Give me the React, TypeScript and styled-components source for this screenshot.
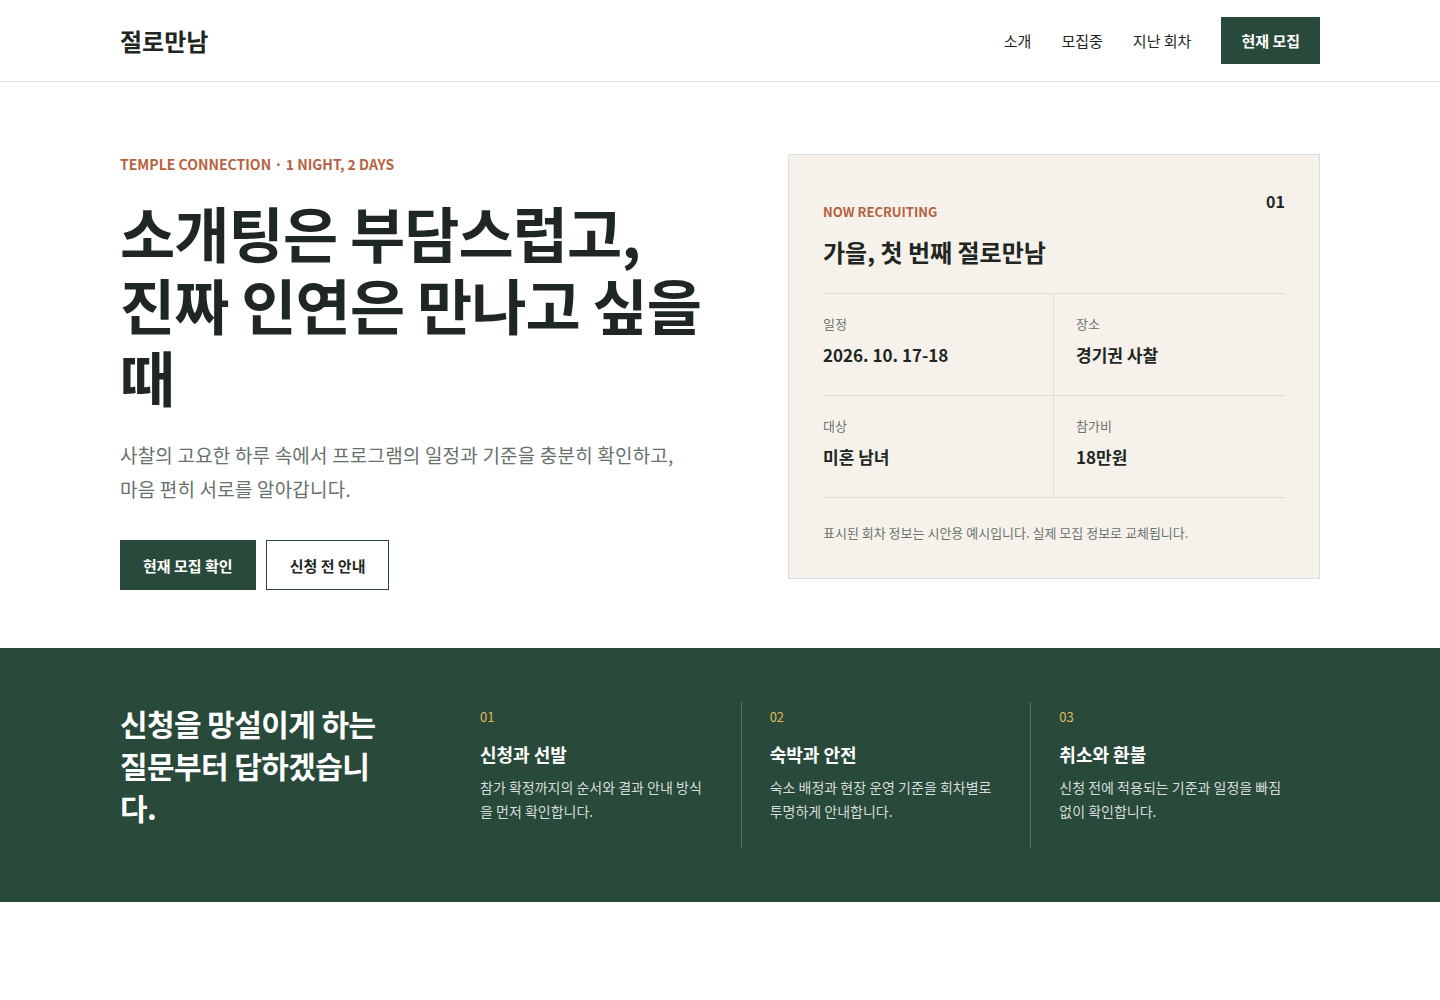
import React from 'react';
import styled, { createGlobalStyle } from 'styled-components';

const GlobalStyle = createGlobalStyle`
  * { box-sizing: border-box; }
  body {
    margin: 0;
    background: #fff;
    color: #1e2723;
    font-family: "Noto Sans CJK KR", "Noto Sans", sans-serif;
  }
  h1, h2, h3, p { margin: 0; }
`;

const Container = styled.div`
  width: 1200px;
  margin: 0 auto;
`;

const Header = styled.header`
  border-bottom: 1px solid #e3e3e3;
`;

const HeaderInner = styled(Container)`
  display: flex;
  align-items: center;
  justify-content: space-between;
  padding: 17px 0;
`;

const Logo = styled.div`
  font-size: 24px;
  font-weight: 700;
`;

const Nav = styled.nav`
  display: flex;
  align-items: center;
  gap: 30px;
`;

const NavLink = styled.a`
  font-size: 15px;
  color: #1e2723;
  text-decoration: none;
`;

const Button = styled.a<{ $variant?: 'solid' | 'outline'; $height?: number }>`
  display: inline-flex;
  align-items: center;
  justify-content: center;
  height: ${(p) => p.$height ?? 50}px;
  padding: 0 ${(p) => (p.$height ? 19 : p.$variant === 'outline' ? 23 : 22)}px;
  font-size: 15px;
  font-weight: 700;
  text-decoration: none;
  border: 1px solid #294a3a;
  background: ${(p) => (p.$variant === 'outline' ? '#fff' : '#294a3a')};
  color: ${(p) => (p.$variant === 'outline' ? '#1e2723' : '#fff')};
`;

const Hero = styled(Container)`
  display: grid;
  grid-template-columns: 600px 532px;
  justify-content: space-between;
  align-items: start;
  padding: 72px 0 58px;
`;

const Eyebrow = styled.div<{ $size?: number }>`
  font-size: ${(p) => p.$size ?? 14}px;
  line-height: 20px;
  font-weight: 700;
  color: #b5623f;
`;

const Title = styled.h1`
  margin-top: 22px;
  font-size: 60px;
  line-height: 72px;
  font-weight: 700;
  letter-spacing: -0.015em;
  word-break: keep-all;
  color: #1e2723;
`;

const Lead = styled.p`
  margin-top: 26px;
  font-size: 19px;
  line-height: 34px;
  letter-spacing: 0.01em;
  color: #67716c;
`;

const Actions = styled.div`
  display: flex;
  gap: 10px;
  margin-top: 34px;
`;

const Card = styled.aside`
  background: #f6f2eb;
  border: 1px solid #d8dfda;
  padding: 33px 34px 35px;
`;

const CardHead = styled.div`
  display: flex;
  justify-content: space-between;
  align-items: flex-start;
`;

const CardHeadText = styled.div`
  padding-top: 14px;
`;

const CardTitle = styled.h2`
  margin-top: 13px;
  font-size: 24px;
  line-height: 34px;
  font-weight: 700;
`;

const CardNum = styled.div`
  font-size: 16px;
  font-weight: 700;
  line-height: 24px;
  padding-top: 1px;
`;

const InfoGrid = styled.div`
  display: grid;
  grid-template-columns: 230px 1fr;
  margin-top: 24px;
  border-bottom: 1px solid #dcdfd8;
`;

const InfoCell = styled.div<{ $right?: boolean }>`
  height: 102px;
  border-top: 1px solid #dcdfd8;
  padding: 20px 0 0 ${(p) => (p.$right ? 22 : 0)}px;
  border-left: ${(p) => (p.$right ? '1px solid #dcdfd8' : 'none')};
`;

const InfoLabel = styled.div`
  font-size: 13px;
  line-height: 20px;
  color: #6c736e;
`;

const InfoValue = styled.div`
  margin-top: 8px;
  font-size: 17px;
  line-height: 26px;
  font-weight: 700;
`;

const Note = styled.p`
  margin-top: 25px;
  font-size: 13px;
  line-height: 20px;
  color: #6c736e;
`;

const FaqSection = styled.section`
  background: #294a3a;
  color: #fff;
`;

const FaqInner = styled(Container)`
  display: grid;
  grid-template-columns: 331px repeat(3, 1fr);
  align-items: start;
  padding: 54px 0;
`;

const FaqHeading = styled.h2`
  max-width: 270px;
  font-size: 30px;
  line-height: 42px;
  font-weight: 700;
  letter-spacing: -0.02em;
`;

const FaqItem = styled.div<{ $first?: boolean }>`
  padding: 5px 28px 25px ${(p) => (p.$first ? 29 : 28)}px;
  border-left: ${(p) => (p.$first ? 'none' : '1px solid rgba(255,255,255,0.22)')};
`;

const FaqNum = styled.div`
  font-size: 13px;
  line-height: 20px;
  color: #e2b75a;
`;

const FaqTitle = styled.h3`
  margin-top: 14px;
  font-size: 18px;
  line-height: 26px;
  font-weight: 700;
`;

const FaqText = styled.p`
  margin-top: 8px;
  font-size: 14px;
  line-height: 24px;
  color: rgba(255, 255, 255, 0.82);
`;

const info = [
  { label: '일정', value: '2026. 10. 17-18' },
  { label: '장소', value: '경기권 사찰' },
  { label: '대상', value: '미혼 남녀' },
  { label: '참가비', value: '18만원' },
];

const faqs = [
  { num: '01', title: '신청과 선발', text: '참가 확정까지의 순서와 결과 안내 방식을 먼저 확인합니다.' },
  { num: '02', title: '숙박과 안전', text: '숙소 배정과 현장 운영 기준을 회차별로 투명하게 안내합니다.' },
  { num: '03', title: '취소와 환불', text: '신청 전에 적용되는 기준과 일정을 빠짐없이 확인합니다.' },
];

const App: React.FC = function() {
  return (
    <>
      <GlobalStyle />
      <Header>
        <HeaderInner>
          <Logo>절로만남</Logo>
          <Nav>
            <NavLink href="#">소개</NavLink>
            <NavLink href="#">모집중</NavLink>
            <NavLink href="#">지난 회차</NavLink>
            <Button href="#" $height={47}>현재 모집</Button>
          </Nav>
        </HeaderInner>
      </Header>

      <Hero>
        <div>
          <Eyebrow>TEMPLE CONNECTION · 1 NIGHT, 2 DAYS</Eyebrow>
          <Title>소개팅은 부담스럽고, 진짜 인연은 만나고 싶을 때</Title>
          <Lead>
            사찰의 고요한 하루 속에서 프로그램의 일정과 기준을 충분히 확인하고,
            <br />
            마음 편히 서로를 알아갑니다.
          </Lead>
          <Actions>
            <Button href="#">현재 모집 확인</Button>
            <Button href="#" $variant="outline">신청 전 안내</Button>
          </Actions>
        </div>

        <Card>
          <CardHead>
            <CardHeadText>
              <Eyebrow $size={13}>NOW RECRUITING</Eyebrow>
              <CardTitle>가을, 첫 번째 절로만남</CardTitle>
            </CardHeadText>
            <CardNum>01</CardNum>
          </CardHead>
          <InfoGrid>
            {info.map((item, i) => (
              <InfoCell key={item.label} $right={i % 2 === 1}>
                <InfoLabel>{item.label}</InfoLabel>
                <InfoValue>{item.value}</InfoValue>
              </InfoCell>
            ))}
          </InfoGrid>
          <Note>표시된 회차 정보는 시안용 예시입니다. 실제 모집 정보로 교체됩니다.</Note>
        </Card>
      </Hero>

      <FaqSection>
        <FaqInner>
          <FaqHeading>신청을 망설이게 하는 질문부터 답하겠습니다.</FaqHeading>
          {faqs.map((faq, i) => (
            <FaqItem key={faq.num} $first={i === 0}>
              <FaqNum>{faq.num}</FaqNum>
              <FaqTitle>{faq.title}</FaqTitle>
              <FaqText>{faq.text}</FaqText>
            </FaqItem>
          ))}
        </FaqInner>
      </FaqSection>
    </>
  );
};

export default App;
